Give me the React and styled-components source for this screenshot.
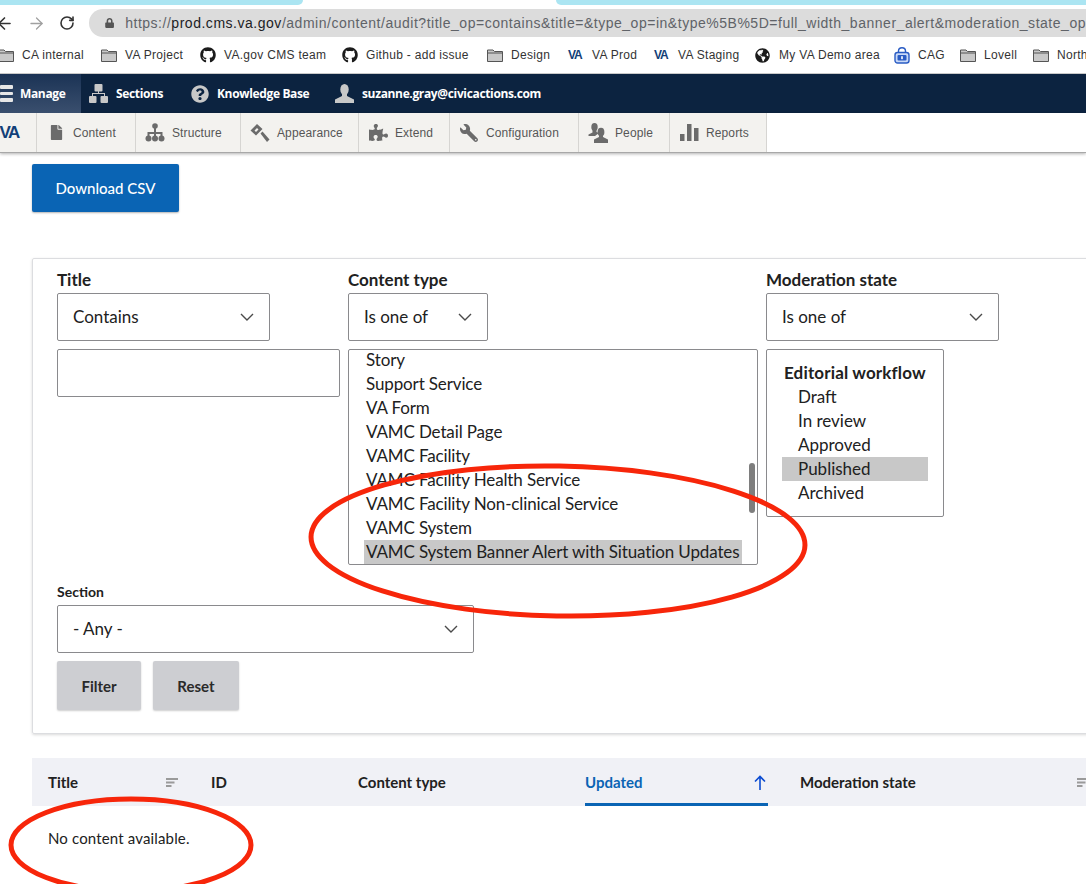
import styled, { createGlobalStyle } from "styled-components";
import { ArrowLeft, ArrowRight, RotateCw } from "lucide-react";
import {
  FaGithub,
  FaGlobeAmericas,
  FaLock,
  FaQuestionCircle,
  FaFile,
  FaPuzzlePiece,
  FaWrench,
} from "react-icons/fa";

const FlippedWrench = styled(FaWrench)`
  transform: scaleX(-1);
`;

const bookmarks = [
  { label: "CA internal", icon: "folder", width: 103 },
  { label: "VA Project", icon: "folder", width: 99 },
  { label: "VA.gov CMS team", icon: "github", width: 142 },
  { label: "Github - add issue", icon: "github", width: 145 },
  { label: "Design", icon: "folder", width: 81 },
  { label: "VA Prod", icon: "va", width: 86 },
  { label: "VA Staging", icon: "va", width: 101 },
  { label: "My VA Demo area", icon: "globe", width: 139 },
  { label: "CAG", icon: "cag", width: 66 },
  { label: "Lovell", icon: "folder", width: 73 },
  { label: "North", icon: "folder", width: 90 },
];

const trayItems = [
  { label: "Content", icon: <FaFile size={15} />, width: 99 },
  { label: "Structure", icon: <StructureIcon />, width: 105 },
  { label: "Appearance", icon: <BrushIcon />, width: 118 },
  { label: "Extend", icon: <FaPuzzlePiece size={19} />, width: 91 },
  { label: "Configuration", icon: <FlippedWrench size={18} />, width: 129 },
  { label: "People", icon: <PeopleIcon />, width: 91 },
  { label: "Reports", icon: <BarsIcon />, width: 97 },
];

const contentTypes = [
  "Story",
  "Support Service",
  "VA Form",
  "VAMC Detail Page",
  "VAMC Facility",
  "VAMC Facility Health Service",
  "VAMC Facility Non-clinical Service",
  "VAMC System",
];

const states = ["Draft", "In review", "Approved", "Published", "Archived"];

function StructureIcon() {
  return (
    <svg width="20" height="19" viewBox="0 0 20 19" fill="#6b6b6b">
      <circle cx="10" cy="3" r="2.8" />
      <rect x="9" y="4" width="2" height="6" />
      <path d="M2.5 9 H17.5 V13 H15.5 V11 H11 V13 H9 V11 H4.5 V13 H2.5 Z" />
      <circle cx="3.5" cy="15.5" r="3" />
      <circle cx="10" cy="15.5" r="3" />
      <circle cx="16.5" cy="15.5" r="3" />
    </svg>
  );
}

function BrushIcon() {
  return (
    <svg width="20" height="20" viewBox="0 0 20 20" fill="#6b6b6b">
      <path d="M7 1 L0.5 7.5 L6 12.5 L12.5 6 Z M7 5 L4.5 7.5 L6 9 L8.5 6.5 Z" fillRule="evenodd" />
      <path d="M10.5 10.5 L12.5 8.5 L19.5 16.5 L17 19 Z" />
    </svg>
  );
}

function PeopleIcon() {
  return (
    <svg width="20" height="20" viewBox="0 0 20 20" fill="#6b6b6b">
      <ellipse cx="6.5" cy="4" rx="3.2" ry="4" />
      <path d="M4.5 7 H8.5 V9 L11 10 L7 13 H0.5 V11.5 L4.5 9.5 Z" />
      <ellipse cx="13" cy="9" rx="3.4" ry="4.3" />
      <path d="M11 12 H15 V14 L20 16.5 V20 H6 V16.5 L11 14 Z" />
    </svg>
  );
}

function BarsIcon() {
  return (
    <svg width="19" height="19" viewBox="0 0 19 19" fill="#6b6b6b">
      <rect x="0" y="11" width="4.5" height="7" />
      <rect x="7" y="1" width="4.5" height="17" />
      <rect x="14" y="5" width="4.5" height="13" />
    </svg>
  );
}

function SectionsIcon() {
  return (
    <svg width="19" height="19" viewBox="0 0 19 19" fill="#c8c8c8">
      <rect x="5.5" y="0" width="8" height="7.5" rx="1" />
      <rect x="0" y="12" width="7.5" height="7" rx="1" />
      <rect x="11.5" y="12" width="7.5" height="7" rx="1" />
      <path d="M9 7 H10 V9 H16 V12 H15 V10 H4 V12 H3 V9 H9 Z" />
    </svg>
  );
}

function UserIcon() {
  return (
    <svg width="19" height="19" viewBox="0 0 19 19" fill="#c8c8c8">
      <ellipse cx="9.5" cy="5.5" rx="4.2" ry="5.5" />
      <path d="M7 9 H12 V12 L19 15.5 V19 H0 V15.5 L7 12 Z" />
    </svg>
  );
}

function FolderIcon() {
  return (
    <svg width="16" height="13" viewBox="0 0 16 13">
      <path
        d="M0.5 12.5 V1 H6 L7.5 2.5 H15.5 V12.5 Z"
        fill="#c9c9c9"
        stroke="#555"
        strokeWidth="1"
      />
      <path d="M0.5 4 H15.5" stroke="#555" strokeWidth="1" fill="none" />
    </svg>
  );
}

function CagIcon() {
  return (
    <svg width="16" height="17" viewBox="0 0 16 17">
      <path d="M4.5 6 V4 a3.5 3.2 0 0 1 7 0 V6" fill="none" stroke="#2a5cc4" strokeWidth="1.4" />
      <rect x="1" y="5.5" width="14" height="10.5" rx="2.5" fill="#c9d9f7" stroke="#2a5cc4" strokeWidth="1.4" />
      <rect x="3.5" y="8" width="9" height="5.5" rx="1" fill="#2a5cc4" />
      <rect x="7.2" y="9.2" width="1.6" height="3" fill="#fff" />
    </svg>
  );
}

function BookmarkIcon({ kind }) {
  if (kind === "github") return <FaGithub size={16} color="#1b1b1b" />;
  if (kind === "globe") return <FaGlobeAmericas size={15} color="#1b1b1b" />;
  if (kind === "cag") return <CagIcon />;
  if (kind === "va") return <VaMark>VA</VaMark>;
  return <FolderIcon />;
}

function SortIcon() {
  return (
    <svg width="12" height="9" viewBox="0 0 12 9" fill="#9a9a9a">
      <rect width="12" height="2" />
      <rect y="3.5" width="8.5" height="2" />
      <rect y="7" width="5.5" height="2" />
    </svg>
  );
}

function Chevron() {
  return (
    <svg width="14" height="8" viewBox="0 0 14 8" fill="none" stroke="#4a4a4a" strokeWidth="1.4">
      <path d="M1 1 L7 7 L13 1" />
    </svg>
  );
}

const App = () => {
  return (
    <Page>
      <GlobalStyle />
      <TabStrip>
        <TabLeft />
        <TabRight />
      </TabStrip>
      <AddressRow>
        <NavIcons>
          <ArrowLeft size={19} color="#333" strokeWidth={2} />
          <ArrowRight size={19} color="#a0a0a0" strokeWidth={1.6} />
          <RotateCw size={16} color="#333" strokeWidth={2.4} />
        </NavIcons>
        <AddressBar>
          <FaLock size={10} color="#555" />
          <Url>
            https://<b>prod.cms.va.gov</b>
            /admin/content/audit?title_op=contains&amp;title=&amp;type_op=in&amp;type%5B%5D=full_width_banner_alert&amp;moderation_state_op
          </Url>
        </AddressBar>
      </AddressRow>
      <BookmarkBar>
        {bookmarks.map((bookmark) => (
          <Bookmark key={bookmark.label} $width={bookmark.width}>
            <BookmarkGlyph>
              <BookmarkIcon kind={bookmark.icon} />
            </BookmarkGlyph>
            {bookmark.label}
          </Bookmark>
        ))}
      </BookmarkBar>

      <AdminBar>
        <ManageTab>
          <Burger>
            <span />
            <span />
            <span />
          </Burger>
          Manage
        </ManageTab>
        <AdminLink $width={102}>
          <SectionsIcon />
          Sections
        </AdminLink>
        <AdminLink $width={144}>
          <FaQuestionCircle size={18} color="#c8c8c8" />
          Knowledge Base
        </AdminLink>
        <AdminLink $width={230}>
          <UserIcon />
          suzanne.gray@civicactions.com
        </AdminLink>
      </AdminBar>
      <Tray>
        <TrayLogo>VA</TrayLogo>
        {trayItems.map((item) => (
          <TrayItem key={item.label} $width={item.width}>
            <TrayIcon>{item.icon}</TrayIcon>
            {item.label}
          </TrayItem>
        ))}
      </Tray>

      <Main>
        <DownloadButton>Download CSV</DownloadButton>
        <FilterPanel>
          <FilterRow>
            <FilterColumn $width={283}>
              <FieldLabel>Title</FieldLabel>
              <Select $width={213}>
                Contains
                <Chevron />
              </Select>
              <TextInput />
            </FilterColumn>
            <FilterColumn $width={410}>
              <FieldLabel>Content type</FieldLabel>
              <Select $width={140}>
                Is one of
                <Chevron />
              </Select>
              <TypeList>
                {contentTypes.map((type) => (
                  <Option key={type}>{type}</Option>
                ))}
                <Option $selected>VAMC System Banner Alert with Situation Updates</Option>
                <Scrollbar />
              </TypeList>
            </FilterColumn>
            <FilterColumn $width={233}>
              <FieldLabel>Moderation state</FieldLabel>
              <Select $width={233}>
                Is one of
                <Chevron />
              </Select>
              <StateList>
                <StateGroup>Editorial workflow</StateGroup>
                {states.map((state) => (
                  <StateOption key={state} $selected={state === "Published"}>
                    {state}
                  </StateOption>
                ))}
              </StateList>
            </FilterColumn>
          </FilterRow>
          <SectionLabel>Section</SectionLabel>
          <Select $width={417}>
            - Any -
            <Chevron />
          </Select>
          <ButtonRow>
            <GreyButton $width={84}>Filter</GreyButton>
            <GreyButton $width={86}>Reset</GreyButton>
          </ButtonRow>
        </FilterPanel>

        <TableHead>
          <HeadCell $width={163}>
            Title
            <HeadSort $right={17}>
              <SortIcon />
            </HeadSort>
          </HeadCell>
          <HeadCell $width={147}>ID</HeadCell>
          <HeadCell $width={227}>Content type</HeadCell>
          <ActiveCell>
            Updated
            <UpArrow viewBox="0 0 12 15" fill="none" stroke="#0b4bd1" strokeWidth="1.6">
              <path d="M6 15 V1.5 M1 6.5 L6 1.5 L11 6.5" />
            </UpArrow>
          </ActiveCell>
          <HeadCell $width={305}>
            Moderation state
            <HeadSort $right={0}>
              <SortIcon />
            </HeadSort>
          </HeadCell>
        </TableHead>
        <EmptyText>No content available.</EmptyText>
      </Main>

      <Annotations width="1086" height="884" viewBox="0 0 1086 884" fill="none" stroke="#f7260a">
        <ellipse cx="558" cy="541" rx="247" ry="75" strokeWidth="5" transform="rotate(1 558 541)" />
        <ellipse cx="131" cy="845" rx="120" ry="46" strokeWidth="5" />
      </Annotations>
    </Page>
  );
};

export default App;

const GlobalStyle = createGlobalStyle`
  html, body {
    margin: 0;
    padding: 0;
    background: #fff;
  }
  * {
    box-sizing: border-box;
  }
`;

const Page = styled.div`
  position: relative;
  width: 1086px;
  height: 884px;
  overflow: hidden;
  background: #fff;
  font-family: Lato, "Liberation Sans", sans-serif;
  color: #212121;
`;

const TabStrip = styled.div`
  display: flex;
  justify-content: space-between;
  height: 5px;
`;

const TabLeft = styled.div`
  width: 303px;
  background: #abe5f2;
  border-bottom-right-radius: 6px;
`;

const TabRight = styled.div`
  width: 530px;
  background: #abe5f2;
  border-bottom-left-radius: 6px;
`;

const AddressRow = styled.div`
  display: flex;
  align-items: center;
  height: 32px;
  padding-top: 4px;
`;

const NavIcons = styled.div`
  display: flex;
  align-items: center;
  gap: 13px;
  width: 87px;
  margin-left: -5px;
  flex-shrink: 0;
`;

const AddressBar = styled.div`
  display: flex;
  align-items: center;
  gap: 11px;
  flex: 1;
  min-width: 0;
  height: 28px;
  margin-left: 7px;
  padding-left: 16px;
  background: #dcdcdc;
  border-radius: 14px 0 0 14px;
  overflow: hidden;
`;

const Url = styled.div`
  font-family: "Liberation Sans", sans-serif;
  font-size: 14px;
  letter-spacing: 0.52px;
  white-space: nowrap;
  color: #606368;

  b {
    font-weight: 400;
    color: #202124;
  }
`;

const BookmarkBar = styled.div`
  display: flex;
  align-items: center;
  height: 37px;
  margin-left: -2px;
  border-bottom: 1px solid #c9c9c9;
  font-family: "Liberation Sans", sans-serif;
  font-size: 12px;
  letter-spacing: 0.3px;
  color: #333;
  overflow: hidden;
`;

const Bookmark = styled.div`
  display: flex;
  align-items: center;
  flex: 0 0 ${(p) => p.$width}px;
  white-space: nowrap;
`;

const BookmarkGlyph = styled.span`
  display: flex;
  align-items: center;
  justify-content: flex-start;
  width: 24px;
  flex-shrink: 0;
`;

const VaMark = styled.span`
  font-size: 12px;
  font-weight: 700;
  letter-spacing: -1px;
  color: #123f78;
`;

const AdminBar = styled.div`
  display: flex;
  align-items: stretch;
  height: 39px;
  background: #0c2340;
  color: #fff;
  font-family: "Open Sans", sans-serif;
  font-size: 12px;
  font-weight: 700;
  letter-spacing: -0.35px;
`;

const ManageTab = styled.div`
  display: flex;
  align-items: center;
  gap: 7px;
  width: 81px;
  background: linear-gradient(#1b3355, #3a4f6e);
`;

const Burger = styled.div`
  display: flex;
  flex-direction: column;
  gap: 3px;
  width: 13px;

  span {
    display: block;
    height: 3.5px;
    background: #e6e6e6;
    border-radius: 1px;
  }
`;

const AdminLink = styled.div`
  display: flex;
  align-items: center;
  gap: 8px;
  width: ${(p) => p.$width}px;
  padding-left: 8px;
  white-space: nowrap;
`;

const Tray = styled.div`
  display: flex;
  align-items: stretch;
  height: 40px;
  background: #fff;
  border-bottom: 1px solid #a8a8a8;
  box-shadow: 0 1px 3px rgba(0, 0, 0, 0.3);
  font-family: "Liberation Sans", sans-serif;
  font-size: 12px;
  letter-spacing: 0.12px;
  color: #565656;
`;

const TrayLogo = styled.div`
  display: flex;
  align-items: center;
  justify-content: flex-end;
  width: 37px;
  padding-right: 17px;
  background: #f3f2ef;
  border-right: 1px solid #d6d5d2;
  font-size: 17px;
  font-weight: 700;
  letter-spacing: -1.4px;
  color: #123f78;
  overflow: hidden;
`;

const TrayItem = styled.div`
  display: flex;
  align-items: center;
  width: ${(p) => p.$width}px;
  padding-left: 8px;
  background: #f3f2ef;
  border-right: 1px solid #d6d5d2;
  white-space: nowrap;
`;

const TrayIcon = styled.span`
  display: flex;
  align-items: center;
  justify-content: center;
  width: 22px;
  margin-right: 6px;
  color: #6b6b6b;
`;

const Main = styled.main`
  padding: 11px 0 0 32px;
`;

const DownloadButton = styled.button`
  display: block;
  width: 147px;
  height: 48px;
  border: 0;
  border-radius: 2px;
  background: #0a64b4;
  box-shadow: 0 1px 2px rgba(0, 0, 0, 0.3);
  color: #fff;
  font-family: Lato, sans-serif;
  font-size: 15px;
  font-weight: 500;
`;

const FilterPanel = styled.section`
  width: 1100px;
  height: 476px;
  margin-top: 46px;
  padding: 9px 0 0 24px;
  border: 1px solid #dcdde0;
  box-shadow: 0 1px 3px rgba(0, 0, 0, 0.15);
  border-radius: 2px;
`;

const FilterRow = styled.div`
  display: flex;
  gap: 8px;
`;

const FilterColumn = styled.div`
  display: flex;
  flex-direction: column;
  width: ${(p) => p.$width}px;
  flex-shrink: 0;
`;

const FieldLabel = styled.div`
  height: 25px;
  line-height: 24px;
  font-size: 17px;
  font-weight: 700;
`;

const Select = styled.div`
  display: flex;
  align-items: center;
  justify-content: space-between;
  width: ${(p) => p.$width}px;
  height: 48px;
  padding: 0 15px 1px;
  border: 1px solid #8a8a8d;
  border-radius: 2px;
  background: #fff;
  font-size: 17px;
`;

const TextInput = styled.div`
  height: 48px;
  margin-top: 8px;
  border: 1px solid #8a8a8d;
  border-radius: 2px;
`;

const TypeList = styled.div`
  position: relative;
  display: flex;
  flex-direction: column;
  justify-content: flex-end;
  height: 216px;
  margin-top: 8px;
  padding: 0 15px 0;
  border: 1px solid #8a8a8d;
  border-radius: 2px;
  overflow: hidden;
  font-size: 17px;
  letter-spacing: -0.13px;
`;

const Option = styled.div`
  flex-shrink: 0;
  height: 24px;
  line-height: 24px;
  padding-left: 2px;
  white-space: nowrap;
  background: ${(p) => (p.$selected ? "#c8c8c8" : "transparent")};
`;

const Scrollbar = styled.div`
  position: absolute;
  top: 113px;
  right: 2px;
  width: 6px;
  height: 50px;
  border-radius: 3px;
  background: #7e7e7e;
`;

const StateList = styled.div`
  width: 178px;
  height: 168px;
  margin-top: 8px;
  padding: 11px 15px;
  border: 1px solid #8a8a8d;
  border-radius: 2px;
  font-size: 17px;
`;

const StateGroup = styled.div`
  height: 24px;
  line-height: 24px;
  padding-left: 2px;
  font-weight: 700;
  letter-spacing: 0.15px;
  white-space: nowrap;
`;

const StateOption = styled.div`
  height: 24px;
  line-height: 24px;
  padding-left: 16px;
  background: ${(p) => (p.$selected ? "#c8c8c8" : "transparent")};
`;

const SectionLabel = styled.div`
  height: 23px;
  margin-top: 17px;
  line-height: 20px;
  font-size: 14px;
  font-weight: 700;
`;

const ButtonRow = styled.div`
  display: flex;
  gap: 12px;
  margin-top: 8px;
`;

const GreyButton = styled.button`
  width: ${(p) => p.$width}px;
  height: 49px;
  border: 0;
  border-radius: 2px;
  background: #cdced2;
  box-shadow: 0 1px 2px rgba(0, 0, 0, 0.2);
  color: #2a2a2a;
  font-family: Lato, sans-serif;
  font-size: 15px;
  font-weight: 700;
`;

const TableHead = styled.div`
  display: flex;
  align-items: stretch;
  width: 1100px;
  height: 48px;
  margin-top: 24px;
  background: #f0f1f6;
  font-size: 15px;
  font-weight: 700;
`;

const HeadCell = styled.div`
  position: relative;
  display: flex;
  align-items: center;
  width: ${(p) => p.$width}px;
  flex-shrink: 0;
  padding-left: 16px;
`;

const HeadSort = styled.span`
  display: flex;
  margin-left: auto;
  margin-right: ${(p) => p.$right}px;
`;

const ActiveCell = styled.div`
  display: flex;
  align-items: center;
  justify-content: space-between;
  width: 183px;
  margin: 0 16px;
  flex-shrink: 0;
  padding: 3px 2px 0 0;
  border-bottom: 3px solid #0a64b4;
  color: #0a64b4;
`;

const UpArrow = styled.svg`
  width: 12px;
  height: 15px;
`;

const EmptyText = styled.p`
  margin: 22px 0 0 16px;
  line-height: 20px;
  font-size: 15px;
  letter-spacing: 0.15px;
`;

const Annotations = styled.svg`
  position: absolute;
  top: 0;
  left: 0;
  pointer-events: none;
`;
